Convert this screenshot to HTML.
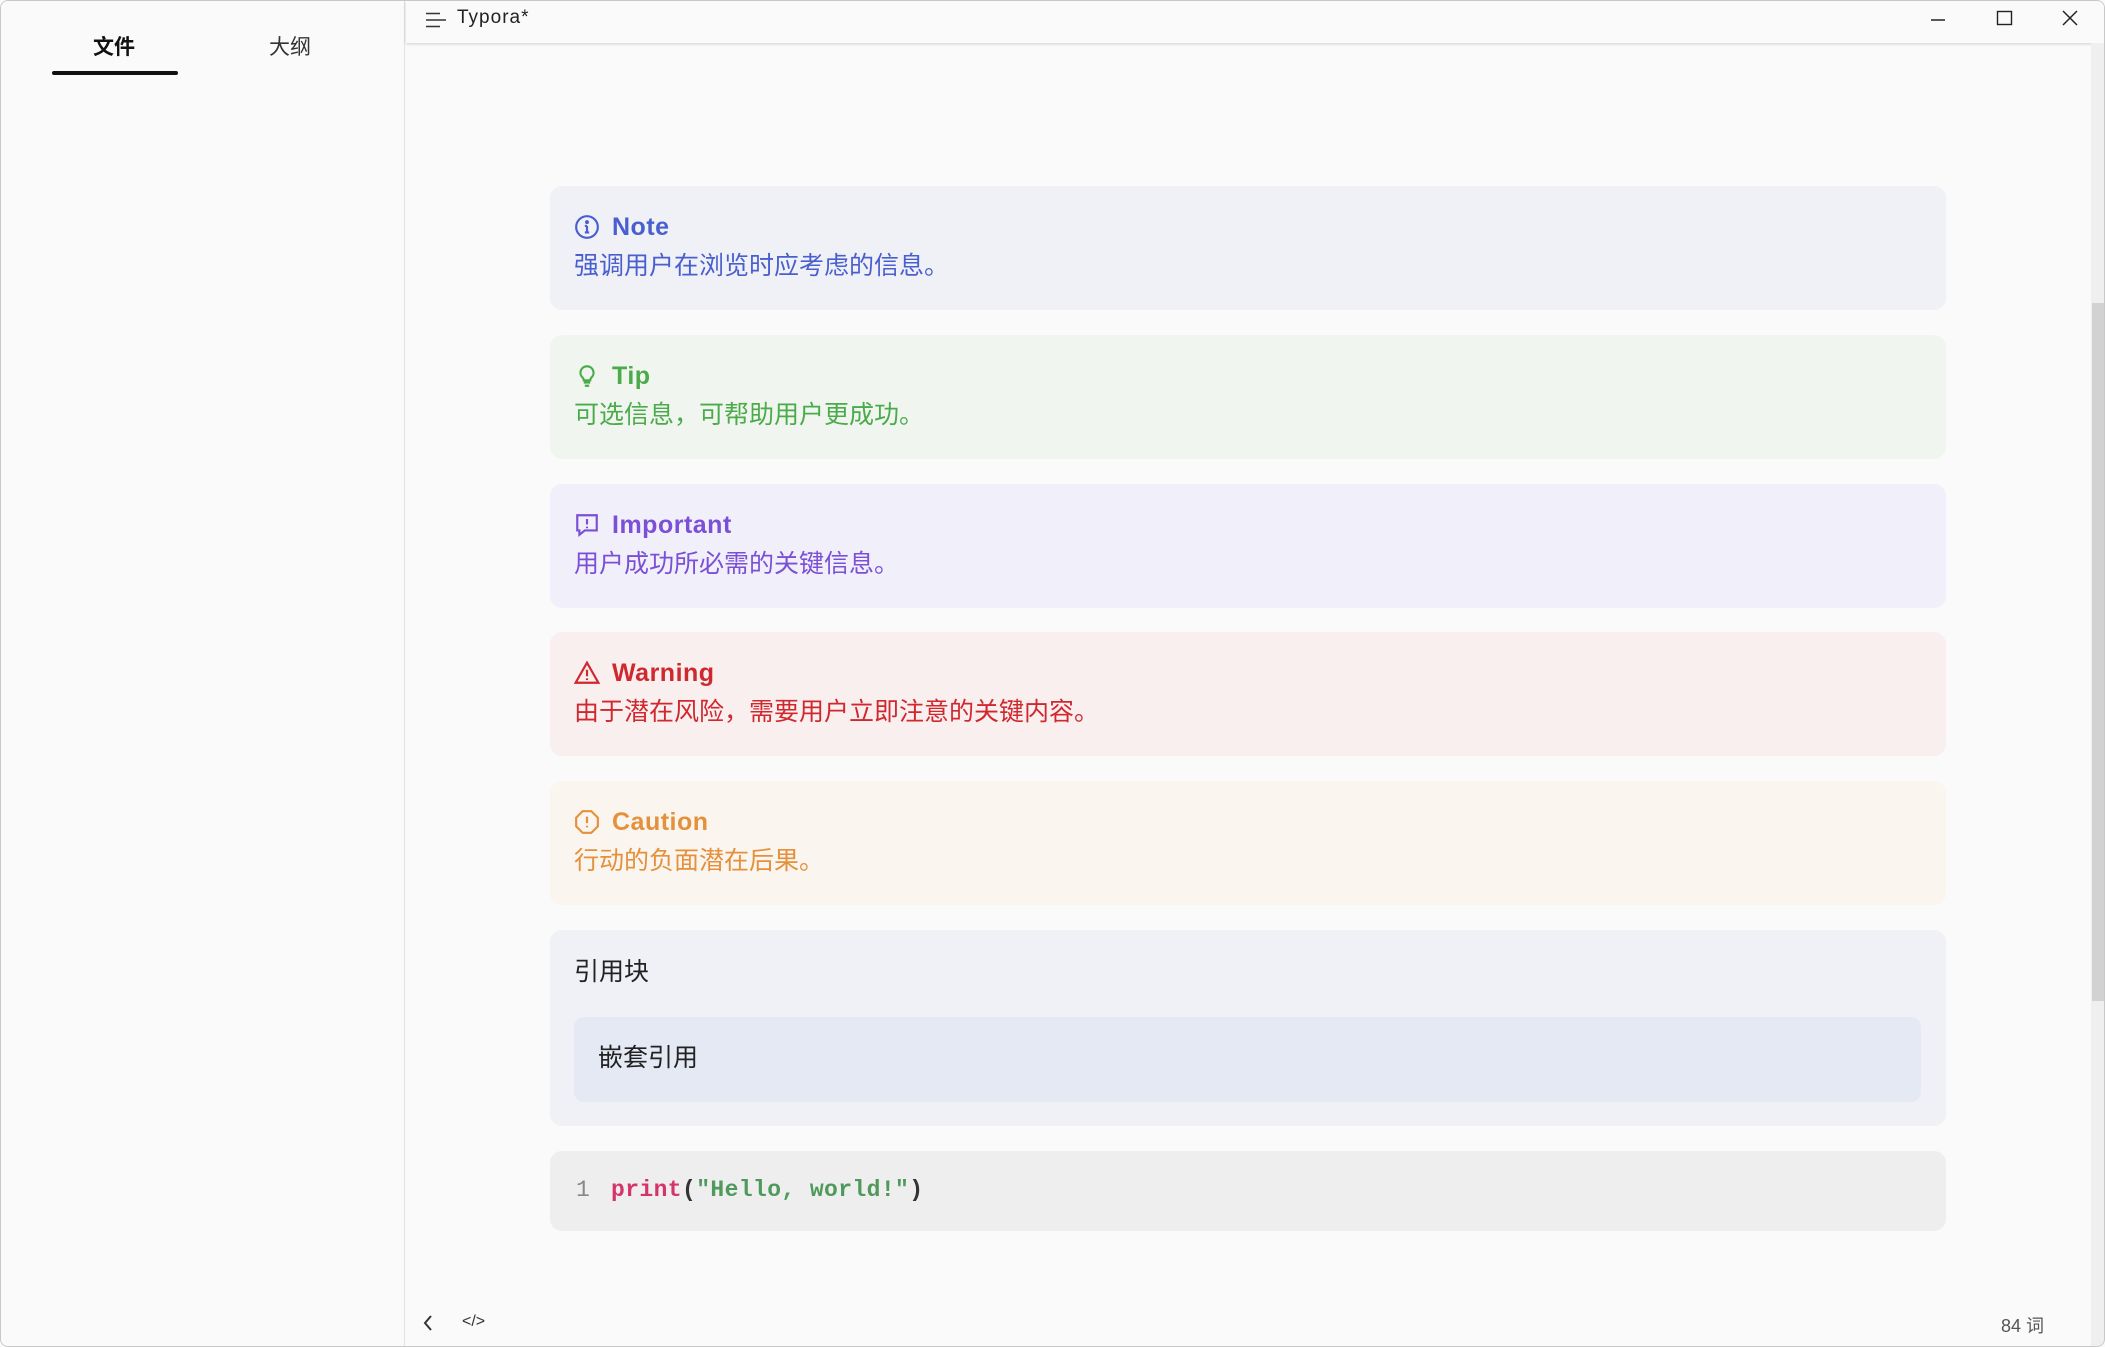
<!DOCTYPE html>
<html><head><meta charset="utf-8"><style>
*{margin:0;padding:0;box-sizing:border-box}
html,body{width:2105px;height:1347px;overflow:hidden;background:#fafafa;font-family:"Liberation Sans","Noto Sans CJK SC",sans-serif}
.win{position:absolute;left:0;top:0;width:2105px;height:1347px;border:1px solid #c8c8c8;border-radius:8px;background:#fafafa;overflow:hidden}
.side{position:absolute;left:0;top:0;width:404px;height:1347px;border-right:1px solid #e2e2e2;background:#fafafa}
.tab{position:absolute;top:30px;font-size:21px;color:#333}
.ul{position:absolute;left:51px;top:70px;width:126px;height:4px;background:#111;border-radius:2px}
.tbar{position:absolute;left:405px;top:0;width:1700px;height:42px;background:#fafafa;box-shadow:0 1px 3px rgba(0,0,0,.18)}
.blk{position:absolute;left:549px;width:1396px;border-radius:12px}
.call{height:124px;padding:26px 24px 0}
.t{display:flex;align-items:center;font-weight:bold;font-size:25px;height:30px;letter-spacing:.5px}
.t svg{margin-right:12px}
.b{font-size:25px;margin-top:4px}
.sb{position:absolute;left:2090px;top:42px;width:15px;height:1305px;background:#efefef}
.th{position:absolute;left:2091px;top:302px;width:13px;height:698px;background:#d2d2d2}
.mono{font-family:"Liberation Mono","DejaVu Sans Mono",monospace}
</style></head><body><div class="win">
<div class="side">
<div class="tab" style="left:92px;font-weight:bold;color:#111">文件</div>
<div class="tab" style="left:268px">大纲</div>
<div class="ul"></div>
</div>
<div class="tbar">
<svg style="position:absolute;left:20px;top:11px" width="20" height="16"><path d="M0 1.5h14M0 8h20M0 14.5h14" stroke="#333" stroke-width="1.5"/></svg>
<div style="position:absolute;left:51px;top:6px;font-size:19px;color:#222;letter-spacing:1px">Typora*</div>
<svg style="position:absolute;left:1522px;top:10px" width="20" height="20"><path d="M3 9h14" stroke="#222" stroke-width="1.4"/></svg>
<svg style="position:absolute;left:1588px;top:8px" width="20" height="20"><rect x="3.5" y="2.5" width="14" height="13" fill="none" stroke="#222" stroke-width="1.4"/></svg>
<svg style="position:absolute;left:1654px;top:8px" width="20" height="20"><path d="M3 2l14 14M17 2L3 16" stroke="#222" stroke-width="1.5"/></svg>
</div>

<div class="blk call" style="top:185px;background:#f0f1f7;color:#4a5fcf">
<div class="t"><svg width="26" height="26" viewBox="0 0 24 24" fill="none" stroke="currentColor" stroke-width="2"><circle cx="12" cy="12" r="10"/><path d="M12 11v6M10 17h4M10 11h2"/><circle cx="12" cy="7.5" r=".8" fill="currentColor"/></svg>Note</div>
<div class="b">强调用户在浏览时应考虑的信息。</div></div>

<div class="blk call" style="top:334px;background:#f0f6ef;color:#4bab4a">
<div class="t"><svg width="26" height="26" viewBox="0 0 24 24" fill="none" stroke="currentColor" stroke-width="2"><path d="M9 18h6M10 21h4M12 3a6 6 0 0 0-4 10.5c.8.8 1 1.5 1 2.5h6c0-1 .2-1.7 1-2.5A6 6 0 0 0 12 3z"/></svg>Tip</div>
<div class="b">可选信息，可帮助用户更成功。</div></div>

<div class="blk call" style="top:483px;background:#f1f0fa;color:#7b4fd6">
<div class="t"><svg width="26" height="26" viewBox="0 0 24 24" fill="none" stroke="currentColor" stroke-width="2"><path d="M3 3h18v14H10l-5 4v-4H3z"/><path d="M12 6.5v5M12 13.5v1.5"/></svg>Important</div>
<div class="b">用户成功所必需的关键信息。</div></div>

<div class="blk call" style="top:631px;background:#f8efee;color:#d0282f">
<div class="t"><svg width="26" height="26" viewBox="0 0 24 24" fill="none" stroke="currentColor" stroke-width="2"><path d="M12 2.5L1.5 21h21z"/><path d="M12 9v6M12 17v1.5"/></svg>Warning</div>
<div class="b">由于潜在风险，需要用户立即注意的关键内容。</div></div>

<div class="blk call" style="top:780px;background:#faf5ef;color:#e5903a">
<div class="t"><svg width="26" height="26" viewBox="0 0 24 24" fill="none" stroke="currentColor" stroke-width="2"><path d="M8 2h8l6 6v8l-6 6H8l-6-6V8z"/><path d="M12 7v6M12 15.5v1.5"/></svg>Caution</div>
<div class="b">行动的负面潜在后果。</div></div>

<div class="blk" style="top:929px;height:196px;background:#f0f1f6">
<div style="position:absolute;left:24px;top:22px;font-size:25px;color:#222">引用块</div>
<div style="position:absolute;left:24px;top:87px;width:1347px;height:85px;background:#e5e9f4;border-radius:10px">
<div style="position:absolute;left:24px;top:21px;font-size:25px;color:#222">嵌套引用</div></div>
</div>

<div class="blk mono" style="top:1150px;height:80px;background:#eeeeef;font-size:23px;font-weight:bold;letter-spacing:.4px">
<span style="position:absolute;left:26px;top:26px;color:#888;font-weight:normal">1</span>
<span style="position:absolute;left:61px;top:26px;white-space:pre"><span style="color:#d7336b">print</span><span style="color:#333">(</span><span style="color:#4f9a5a">"Hello, world!"</span><span style="color:#333">)</span></span>
</div>

<div class="sb"></div><div class="th"></div>
<svg style="position:absolute;left:420px;top:1313px" width="14" height="18"><path d="M10 2L4 9l6 7" fill="none" stroke="#333" stroke-width="2"/></svg>
<div style="position:absolute;left:461px;top:1312px;font-size:16px;color:#333">&lt;/&gt;</div>
<div style="position:absolute;left:2000px;top:1311px;font-size:18px;color:#555">84 词</div>
</div></body></html>
